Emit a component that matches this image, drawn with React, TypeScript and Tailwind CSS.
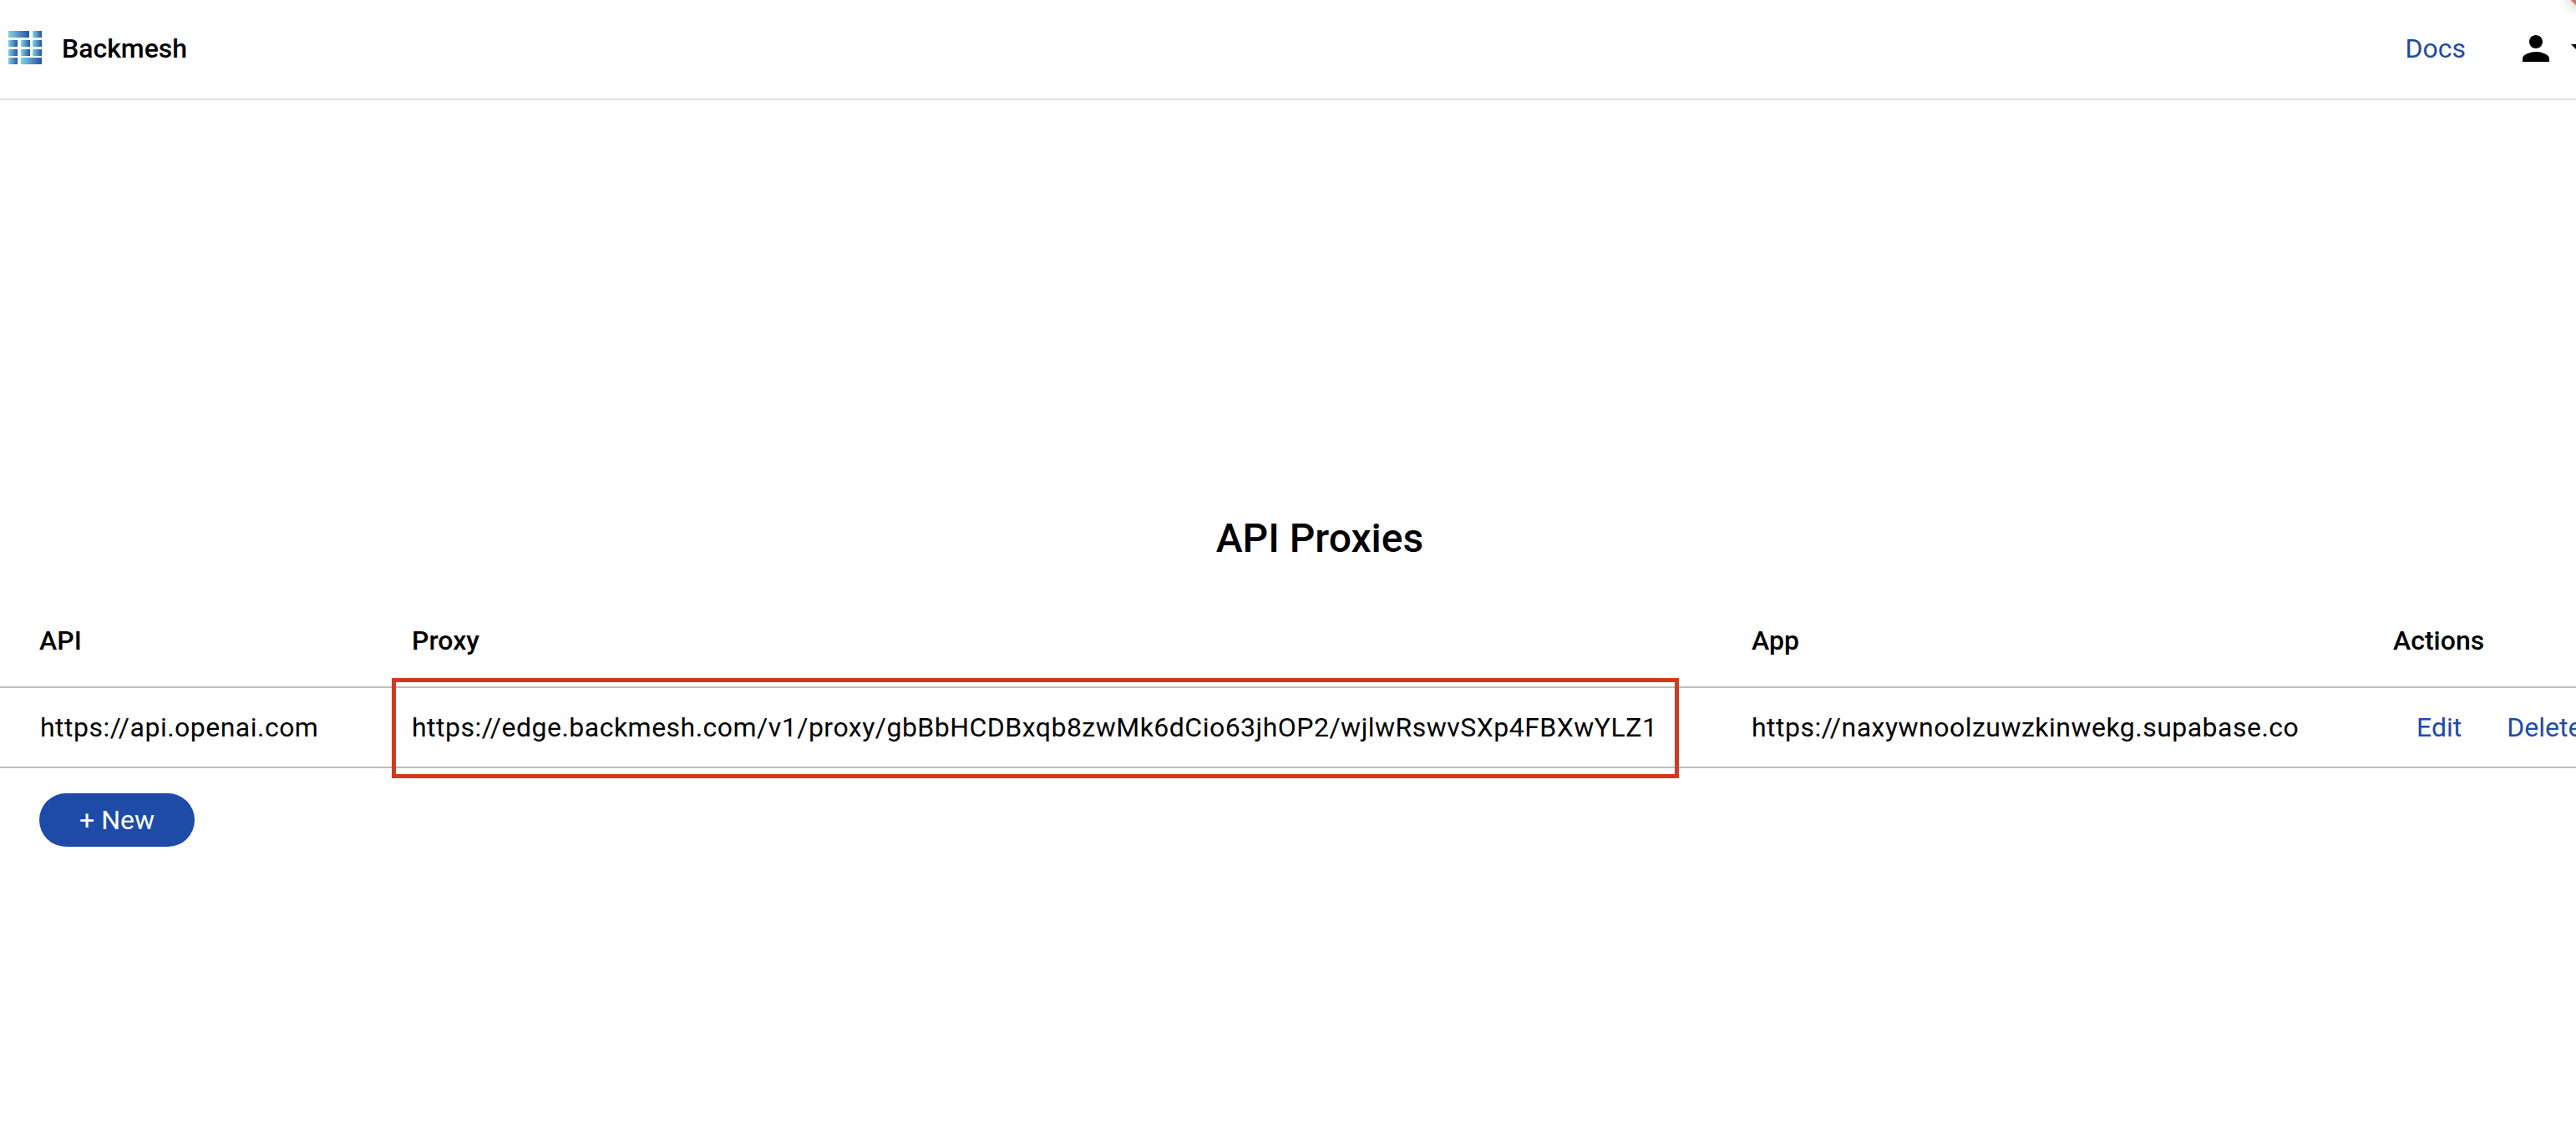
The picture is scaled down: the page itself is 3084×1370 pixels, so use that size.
const font = "font-['Roboto',sans-serif]";

function Logo() {
  const rows = [
    [[10, 25], [39, 11]],
    [[10, 11], [25, 11], [39, 11]],
    [[10, 11], [25, 11], [39, 11]],
    [[10, 11], [25, 25]],
  ];
  const ys = [18, 29, 40, 50];
  return (
    <svg viewBox="0 0 60 80" className="h-[80px] w-[60px]">
      <defs>
        <linearGradient id="g" x1="0" x2="1" y1="0" y2="0">
          <stop offset="0" stopColor="#7fd3e2" />
          <stop offset="1" stopColor="#2552a8" />
        </linearGradient>
      </defs>
      {rows.map((r, i) =>
        r.map(([x, w], j) => <rect key={`${i}-${j}`} x={x} y={ys[i]} width={w} height="8" fill="url(#g)" />)
      )}
    </svg>
  );
}

export default function App() {
  return (
    <div className={`${font} relative h-[1370px] w-[3084px] overflow-hidden bg-white text-[32px] text-black`}>
      <div className="w-[3160px]">
        <header className="flex h-[120px] items-center border-b-2 border-[#e0e0e0]">
          <div className="flex items-center">
            <Logo />
            <span className="ml-[14px] mt-[-3px] font-medium">Backmesh</span>
          </div>
          <div className="ml-auto flex shrink-0 items-center pr-[62px]">
            <a className="text-[#1e4ba8] mt-[-2px]">Docs</a>
            <svg viewBox="0 0 24 24" className="ml-[60px] mt-[-2px] h-[48px] w-[48px]" fill="currentColor">
              <path d="M12 12c2.21 0 4-1.79 4-4s-1.79-4-4-4-4 1.79-4 4 1.79 4 4 4zm0 2c-2.67 0-8 1.34-8 4v2h16v-2c0-2.66-5.33-4-8-4z" />
            </svg>
            <svg viewBox="0 0 20 12" className="ml-[18px] h-[12px] w-[20px]" fill="currentColor">
              <path d="M0 0h20L10 10z" />
            </svg>
          </div>
        </header>

        <h1 className="mt-[493px] text-center text-[48px] font-medium leading-[64px]">API Proxies</h1>

        <table className="mt-[34px] w-[3160px] table-fixed border-collapse text-left">
          <colgroup>
            <col className="w-[469px]" />
            <col className="w-[1604px]" />
            <col className="w-[768px]" />
            <col />
          </colgroup>
          <thead>
            <tr className="h-[112px] border-b-2 border-[#bdbdbd]">
              <th className="pl-[47px] font-medium">API</th>
              <th className="pl-[24px] font-medium">Proxy</th>
              <th className="pl-[24px] font-medium">App</th>
              <th className="pl-[24px] font-medium">Actions</th>
            </tr>
          </thead>
          <tbody className="tracking-[0.48px]">
            <tr className="h-[96px] border-b-2 border-[#bdbdbd]">
              <td className="pl-[48px]">https://api.openai.com</td>
              <td className="relative pl-[24px]">
                https://edge.backmesh.com/v1/proxy/gbBbHCDBxqb8zwMk6dCio63jhOP2/wjlwRswvSXp4FBXwYLZ1
                <div className="absolute left-0 top-[-12px] h-[120px] w-[1541px] border-[5px] border-[#d13a21]" />
              </td>
              <td className="pl-[24px]">https://naxywnoolzuwzkinwekg.supabase.co</td>
              <td className="pl-[52px] tracking-normal text-[#1e4ba8]">
                <a>Edit</a>
                <a className="ml-[54px]">Delete</a>
              </td>
            </tr>
          </tbody>
        </table>

        <button className="ml-[47px] mt-[30px] h-[64px] w-[186px] rounded-full bg-[#1e4ba8] text-white">+ New</button>
      </div>
      <div className="absolute left-[3078px] top-[-14px] h-[20px] w-[20px] rotate-45 bg-[#c9756b] shadow-[0_0_16px_rgba(0,0,0,0.3)]" />
    </div>
  );
}
